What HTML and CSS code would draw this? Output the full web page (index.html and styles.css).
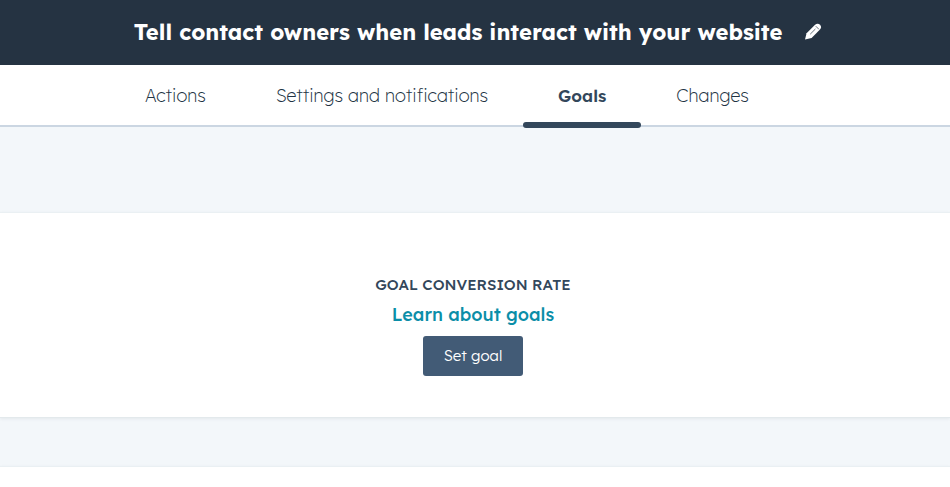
FILE: index.html
```html
<!DOCTYPE html>
<html lang="en">
<head>
    <meta charset="UTF-8">
    <meta name="viewport" content="width=device-width, initial-scale=1.0">
    <title>Workflow - Goals</title>
    <link rel="stylesheet" href="styles.css">
</head>
<body>
    <header class="header">
        <h1>Tell contact owners when leads interact with your website</h1>
        <button class="edit-btn" type="button" aria-label="Edit name">
            <svg width="18" height="18" viewBox="0 0 18 18" aria-hidden="true">
                <path d="M1 16.5 L2.6 10.2 L10.8 2 Q13.6 -0.4 16 1.7 Q18.2 4 16 6.6 L7.6 15 Z" fill="#fff"/>
                <path d="M11.8 3.2 L15 6.4 M6.2 11.2 L11.4 6" fill="none" stroke="#253342" stroke-width="0.7"/>
            </svg>
        </button>
    </header>

    <nav class="tabs">
        <a class="tab" href="#actions">Actions</a>
        <a class="tab" href="#settings">Settings and notifications</a>
        <a class="tab active" href="#goals" aria-current="page">Goals</a>
        <a class="tab" href="#changes">Changes</a>
    </nav>

    <main class="content">
        <section class="panel goal">
            <h2>GOAL CONVERSION RATE</h2>
            <a class="learn-link" href="#learn">Learn about goals</a>
            <button class="btn" type="button">Set goal</button>
        </section>
        <section class="panel next-panel"></section>
    </main>
</body>
</html>
```

FILE: styles.css
```css
* {
    box-sizing: border-box;
}

body {
    margin: 0;
    min-height: 100vh;
    display: flex;
    flex-direction: column;
    font-family: "Lexend", "Inter", sans-serif;
    color: #33475b;
    background-color: #f3f7fa;
}

.header {
    display: flex;
    align-items: center;
    justify-content: center;
    gap: 22px;
    padding: 16px 0 17px 6px;
    background-color: #253342;
}

.header h1 {
    margin: 0;
    font-size: 22px;
    font-weight: 700;
    line-height: 32px;
    color: #fff;
}

.edit-btn {
    display: flex;
    padding: 0;
    border: 0;
    background: none;
    cursor: pointer;
}

.tabs {
    display: flex;
    padding-left: 110px;
    background-color: #fff;
    border-bottom: 2px solid #cbd6e2;
}

.tab {
    position: relative;
    padding: 19px 35px 17px;
    font-size: 18px;
    font-weight: 200;
    line-height: 24px;
    white-space: nowrap;
    color: #213343;
    text-decoration: none;
}

.tab.active {
    font-size: 17px;
    font-weight: 600;
    color: #33475b;
}

/* Marker sits over the bottom border of the tab bar */
.tab.active::after {
    content: "";
    position: absolute;
    left: 0;
    right: 0;
    bottom: -3px;
    height: 6px;
    border-radius: 3px;
    background-color: #33475b;
}

.content {
    flex: 1;
    display: flex;
    flex-direction: column;
    gap: 48px;
    padding-top: 85px;
}

.panel {
    background-color: #fff;
    border-top: 1px solid #eaf0f3;
    border-bottom: 1px solid #e3e9ec;
    box-shadow: 0 1px 3px rgba(45, 62, 80, 0.08);
}

.goal {
    display: flex;
    flex-direction: column;
    align-items: center;
    padding: 60px 4px 41px 0;
}

.goal h2 {
    margin: 0 0 6px;
    font-size: 15px;
    font-weight: 500;
    line-height: 24px;
}

.learn-link {
    margin-bottom: 9px;
    font-size: 18px;
    font-weight: 500;
    line-height: 24px;
    color: #0b8ea8;
    text-decoration: none;
}

.btn {
    padding: 8px 21px;
    border: 0;
    border-radius: 3px;
    font-family: inherit;
    font-size: 15px;
    font-weight: 300;
    line-height: 24px;
    color: #fff;
    background-color: #425b76;
    cursor: pointer;
}

.next-panel {
    flex: 1;
    border-bottom: 0;
}
```
